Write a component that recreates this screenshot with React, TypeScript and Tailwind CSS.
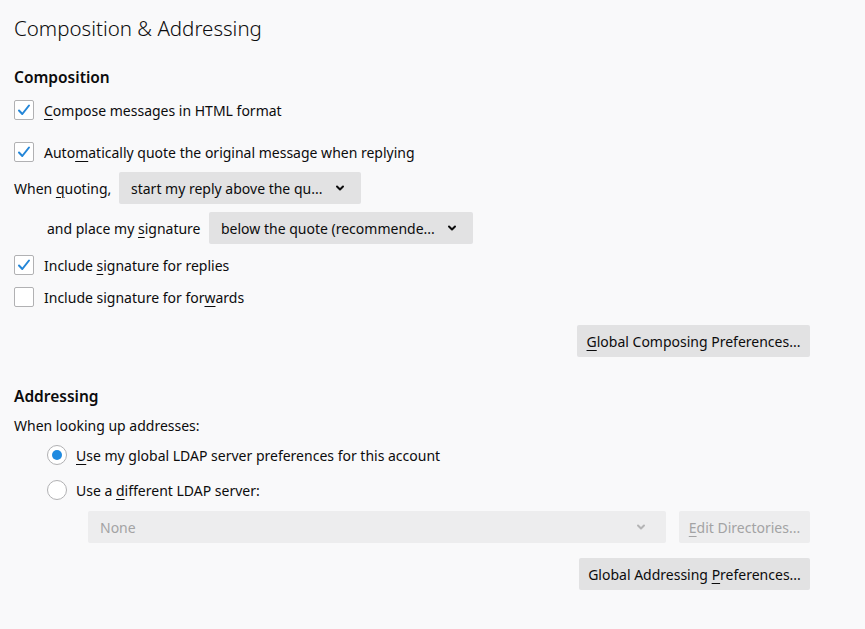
import React from "react";

const Check = ({ checked }: { checked: boolean }) => (
  <div className="w-[20px] h-[20px] shrink-0 rounded-[2px] border border-[#b1b1b3] bg-white flex items-center justify-center">
    {checked && (
      <svg width="14" height="14" viewBox="0 0 14 14">
        <path d="M2 7.5 L5.3 11 L12 2.5" fill="none" stroke="#2486d8" strokeWidth="2" strokeLinecap="round" strokeLinejoin="round" />
      </svg>
    )}
  </div>
);

const Radio = ({ checked }: { checked: boolean }) => (
  <div className="w-[20px] h-[20px] shrink-0 rounded-full border border-[#b1b1b3] bg-white flex items-center justify-center">
    {checked && <div className="w-[10px] h-[10px] rounded-full bg-[#1f8ae0]" />}
  </div>
);

const Chevron = ({ color = "#0c0c0d" }: { color?: string }) => (
  <svg width="10" height="8" viewBox="0 0 10 8">
    <path d="M2 2.5 L5 5.5 L8 2.5" fill="none" stroke={color} strokeWidth="2" strokeLinecap="round" strokeLinejoin="round" />
  </svg>
);

const U = ({ children }: { children: React.ReactNode }) => (
  <span className="underline underline-offset-[3px] decoration-1">{children}</span>
);

export default function App() {
  return (
    <div
      className="w-[865px] h-[629px] bg-[#f9f9fa] text-[#0c0c0d] pl-[14px] flex flex-col text-[14px] whitespace-nowrap overflow-hidden"
      style={{ fontFamily: '"Noto Sans", "Open Sans", sans-serif' }}
    >
      <div className="h-[32px] mt-[12px] flex items-center text-[20.5px] font-light">
        Composition &amp; Addressing
      </div>

      <div className="h-[24px] mt-[22px] flex items-center text-[15.5px] font-semibold">Composition</div>

      <div className="h-[24px] mt-[8px] flex items-center gap-[10px]">
        <Check checked />
        <span>
          <U>C</U>ompose messages in HTML format
        </span>
      </div>

      <div className="h-[24px] mt-[18px] flex items-center gap-[10px]">
        <Check checked />
        <span>
          Auto<U>m</U>atically quote the original message when replying
        </span>
      </div>

      <div className="h-[32px] mt-[8px] flex items-center">
        <span className="w-[105px]">
          When <U>q</U>uoting,
        </span>
        <div className="w-[242px] h-[32px] rounded-[2px] bg-[#e2e2e3] flex items-center pl-[12px] pr-[16px] justify-between">
          <span>start my reply above the qu...</span>
          <Chevron />
        </div>
      </div>

      <div className="h-[32px] mt-[8px] flex items-center pl-[33px]">
        <span className="w-[162px]">
          and place my <U>s</U>ignature
        </span>
        <div className="w-[264px] h-[32px] rounded-[2px] bg-[#e2e2e3] flex items-center pl-[12px] pr-[16px] justify-between">
          <span>below the quote (recommende...</span>
          <Chevron />
        </div>
      </div>

      <div className="h-[24px] mt-[9px] flex items-center gap-[10px]">
        <Check checked />
        <span>
          Include <U>s</U>ignature for replies
        </span>
      </div>

      <div className="h-[24px] mt-[8px] flex items-center gap-[10px]">
        <Check checked={false} />
        <span>
          Include signature for for<U>w</U>ards
        </span>
      </div>

      <div className="h-[32px] mt-[16px] flex justify-end pr-[55px]">
        <div className="w-[233px] h-[32px] rounded-[2px] bg-[#e2e2e3] flex items-center justify-center">
          <span>
            <U>G</U>lobal Composing Preferences...
          </span>
        </div>
      </div>

      <div className="h-[24px] mt-[28px] flex items-center text-[15.5px] font-semibold">Addressing</div>

      <div className="h-[24px] mt-[4px] flex items-center">When looking up addresses:</div>

      <div className="h-[24px] mt-[6px] flex items-center gap-[9px] pl-[33px]">
        <Radio checked />
        <span>
          <U>U</U>se my global LDAP server preferences for this account
        </span>
      </div>

      <div className="h-[24px] mt-[11px] flex items-center gap-[9px] pl-[33px]">
        <Radio checked={false} />
        <span>
          Use a <U>d</U>ifferent LDAP server:
        </span>
      </div>

      <div className="h-[32px] mt-[9px] flex items-center pl-[74px] gap-[13px]">
        <div className="w-[578px] h-[32px] rounded-[2px] bg-[#ededee] flex items-center pl-[12px] pr-[20px] justify-between text-[#a3a3a4]">
          <span>None</span>
          <Chevron color="#b4b4b5" />
        </div>
        <div className="w-[131px] h-[32px] rounded-[2px] bg-[#ededee] flex items-center justify-center text-[#a3a3a4]">
          <span>
            <U>E</U>dit Directories...
          </span>
        </div>
      </div>

      <div className="h-[32px] mt-[15px] flex justify-end pr-[55px]">
        <div className="w-[231px] h-[32px] rounded-[2px] bg-[#e2e2e3] flex items-center justify-center">
          <span>
            Global Addressing <U>P</U>references...
          </span>
        </div>
      </div>
    </div>
  );
}
